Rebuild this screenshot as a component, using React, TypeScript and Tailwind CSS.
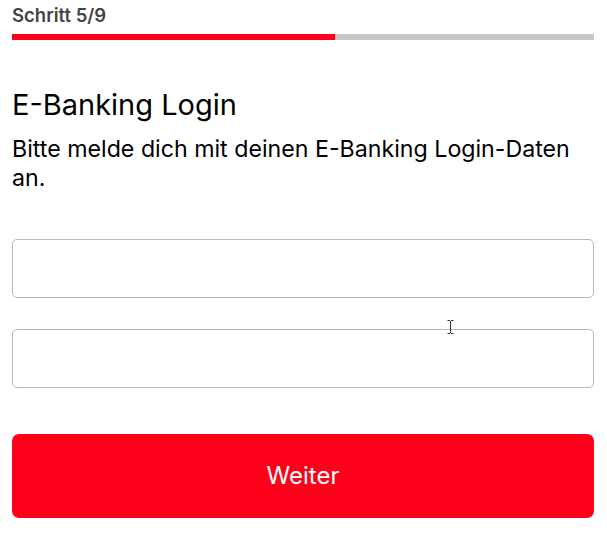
export default function App() {
  const step = 5;
  const total = 9;

  return (
    <div className="relative min-h-screen bg-white pl-3 pr-[13px] pt-[4px] font-['Inter',sans-serif] text-black">
      {/* Step indicator */}
      <p className="text-[18.5px] font-semibold leading-[23px] text-[#444]">
        Schritt {step}/{total}
      </p>
      <div className="mt-[7px] flex h-[6px] w-full bg-[#c8c8c8]">
        <div className="h-full bg-[#ff001a]" style={{ width: `${(step / total) * 100}%` }} />
      </div>

      <h1 className="mt-[47px] text-[29px] font-normal leading-[36px]">E-Banking Login</h1>
      <p className="mt-[12px] text-[23.2px] leading-[29px]">
        Bitte melde dich mit deinen E-Banking Login-Daten an.
      </p>

      <div className="mt-[46px] flex flex-col gap-[31px]">
        <input
          type="text"
          className="h-[59px] w-full rounded-[5px] border-[1.5px] border-[#b9b9b9] bg-white px-3 text-[20px] outline-none"
        />
        <input
          type="password"
          className="h-[59px] w-full rounded-[5px] border-[1.5px] border-[#b9b9b9] bg-white px-3 text-[20px] outline-none"
        />
      </div>

      <button className="mt-[46px] flex h-[84px] w-full items-center justify-center rounded-[7px] bg-[#ff001a] text-[24px] text-white">
        Weiter
      </button>

      {/* mouse cursor */}
      <svg className="absolute left-[447px] top-[320px]" width="7" height="14" viewBox="0 0 7 14">
        <path d="M0.5 0.5h2.5M4 0.5h2.5M3.5 1v12M0.5 13.5h2.5M4 13.5h2.5" stroke="#333" strokeWidth="1" fill="none" />
      </svg>
    </div>
  );
}
